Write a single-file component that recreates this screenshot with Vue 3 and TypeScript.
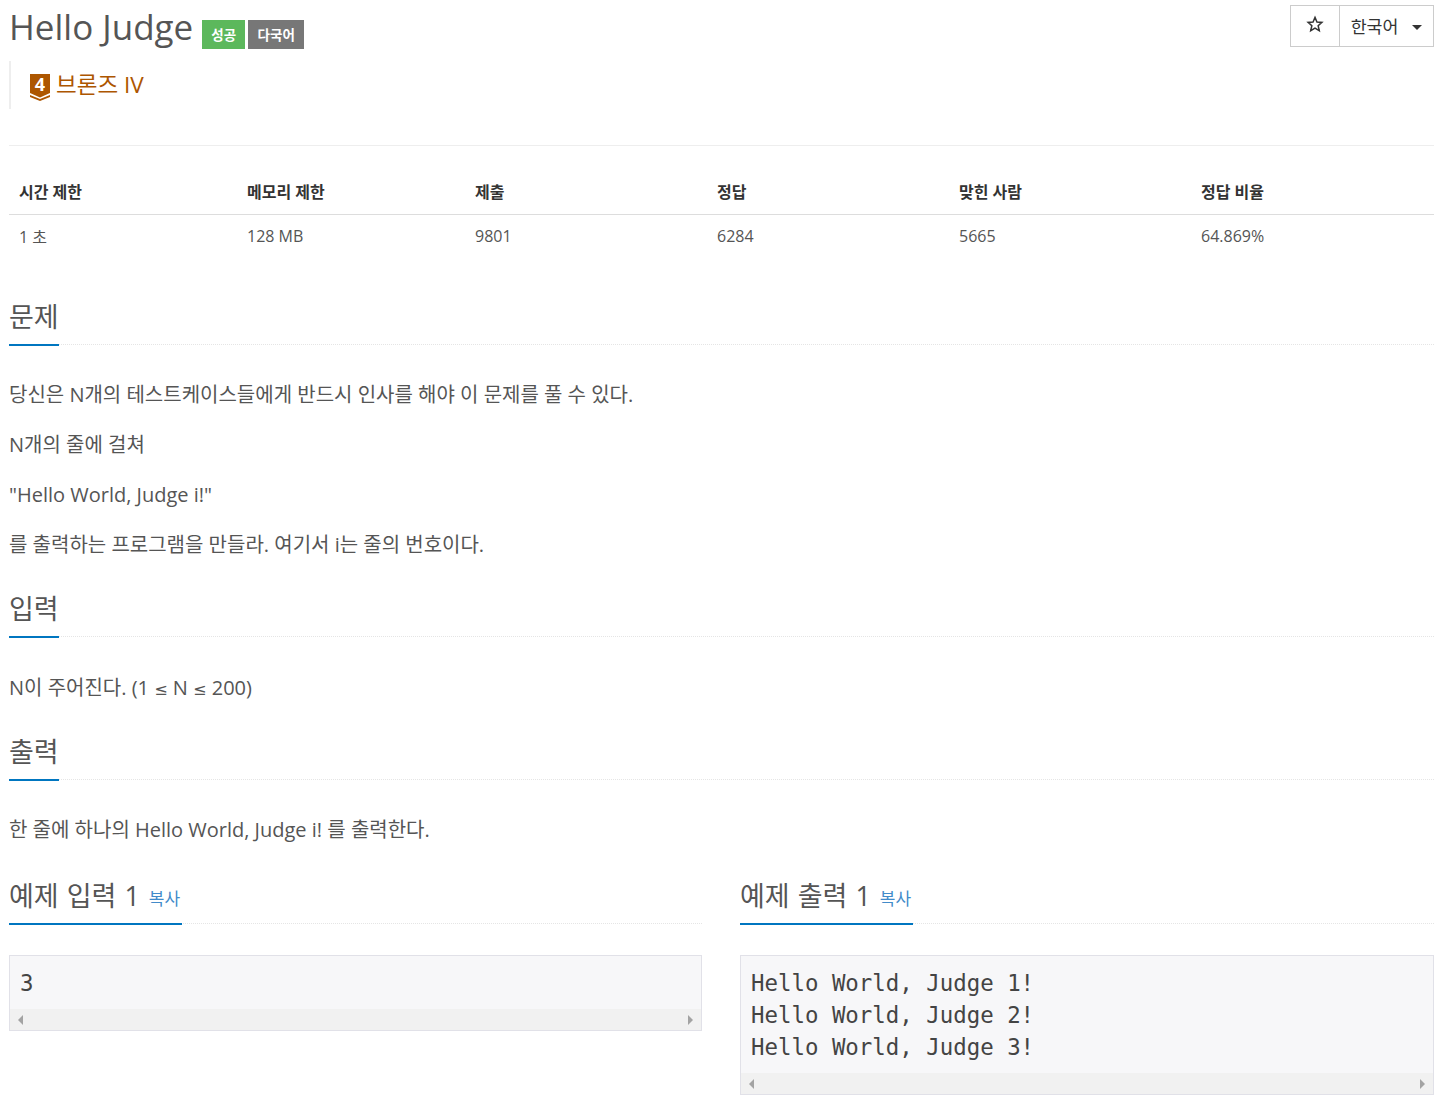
<script setup lang="ts">
const headers: string[] = ['시간 제한', '메모리 제한', '제출', '정답', '맞힌 사람', '정답 비율']
const values: string[] = ['1 초', '128 MB', '9801', '6284', '5665', '64.869%']
const problem: string[] = [
  '당신은 N개의 테스트케이스들에게 반드시 인사를 해야 이 문제를 풀 수 있다.',
  'N개의 줄에 걸쳐',
  '"Hello World, Judge i!"',
  '를 출력하는 프로그램을 만들라. 여기서 i는 줄의 번호이다.'
]
</script>

<template>
  <div class="page">
    <div class="top">
      <div class="title-wrap">
        <span class="title">Hello Judge</span>
        <span class="label green">성공</span>
        <span class="label gray">다국어</span>
      </div>
      <div class="btns">
        <span class="btn star">
          <svg width="18" height="18" viewBox="0 0 24 24" fill="none" stroke="#333" stroke-width="2" stroke-linejoin="miter"><path d="M12 3.2l2.600 6.100 6.600.6-5 4.400 1.500 6.500L12 17.400l-5.700 3.400 1.500-6.500-5-4.400 6.600-.6z"/></svg>
        </span>
        <span class="btn lang">한국어<i class="caret"></i></span>
      </div>
    </div>
    <div class="tier">
      <svg class="tier-icon" width="20" height="27" viewBox="0 0 20 27">
        <path d="M0 0H20V19L10 23.500L0 19Z" fill="#ad5600"/>
        <path d="M0 21L10 25L20 21V23L10 27L0 23Z" fill="#ad5600"/>
        <text x="10" y="17" text-anchor="middle" class="tier-num">4</text>
      </svg>
      <span class="tier-name">브론즈 IV</span>
    </div>
    <hr class="rule" />

    <table class="info">
      <thead>
        <tr><th v-for="h in headers" :key="h">{{ h }}</th></tr>
      </thead>
      <tbody>
        <tr><td v-for="v in values" :key="v">{{ v }}</td></tr>
      </tbody>
    </table>

    <section class="sec first">
      <div class="head"><h2>문제</h2></div>
      <div class="body">
        <p v-for="p in problem" :key="p">{{ p }}</p>
      </div>
    </section>

    <section class="sec">
      <div class="head"><h2>입력</h2></div>
      <div class="body"><p class="input-line">N이 주어진다. (1 <span class="le">≤</span> N <span class="le">≤</span> 200)</p></div>
    </section>

    <section class="sec">
      <div class="head"><h2>출력</h2></div>
      <div class="body"><p>한 줄에 하나의 Hello World, Judge i! 를 출력한다.</p></div>
    </section>

    <div class="samples">
      <section class="sample">
        <div class="head"><h2>예제 입력 1 <a class="copy">복사</a></h2></div>
        <div class="pre">
          <pre>3</pre>
          <div class="scrollbar"><i class="arrow left"></i><i class="arrow right"></i></div>
        </div>
      </section>
      <section class="sample">
        <div class="head"><h2>예제 출력 1 <a class="copy">복사</a></h2></div>
        <div class="pre">
          <pre>Hello World, Judge 1!
Hello World, Judge 2!
Hello World, Judge 3!</pre>
          <div class="scrollbar"><i class="arrow left"></i><i class="arrow right"></i></div>
        </div>
      </section>
    </div>
  </div>
</template>

<style>
html, body { background: #fff; }
</style>

<style scoped>
.page {
  box-sizing: border-box;
  width: 1437px;
  height: 1099px;
  overflow: hidden;
  padding: 0 3px 0 9px;
  font-family: "Open Sans", "Noto Sans CJK KR", sans-serif;
  color: #555;
}
.top { display: flex; justify-content: space-between; align-items: flex-start; height: 61px; }
.title-wrap { display: flex; align-items: flex-start; }
.title { font-size: 35px; line-height: 54px; color: #555; }
.label {
  margin-top: 20px;
  height: 29px;
  line-height: 30px;
  font-size: 13.500px;
  font-weight: 700;
  color: #fff;
  text-align: center;
}
.green { background: #5cb85c; width: 43px; margin-left: 9px; }
.gray { background: #777; width: 56px; margin-left: 3px; }
.btns { display: flex; margin-top: 5px; height: 42px; border: 1px solid #ccc; box-sizing: border-box; }
.btn { display: flex; align-items: center; justify-content: center; color: #333; font-size: 17.300px; }
.star { width: 49px; border-right: 1px solid #ccc; box-sizing: border-box; padding-bottom: 4px; }
.lang { width: 93px; padding-bottom: 2px; box-sizing: border-box; }
.caret {
  margin-left: 14px;
  margin-top: 4px;
  width: 0;
  height: 0;
  border-top: 5px solid #333;
  border-left: 5px solid transparent;
  border-right: 5px solid transparent;
}
.tier {
  height: 48px;
  border-left: 2px solid #eee;
  padding-left: 19px;
  display: flex;
  align-items: flex-start;
  gap: 6px;
}
.tier-icon { margin-top: 13px; overflow: visible; }
.tier-num { font: 700 18px "Open Sans", sans-serif; fill: #fff; }
.tier-name { font-size: 22.500px; line-height: 48px; color: #ad5600; }
.rule { margin: 36px 0 0; border: 0; border-top: 1px solid #eee; }
.info { width: 100%; border-collapse: collapse; table-layout: fixed; margin-top: 24px; font-size: 16px; color: #555; }
.info th, .info td { box-sizing: border-box; padding: 0 10px; text-align: left; }
.info th { height: 44px; font-size: 16px; font-weight: 700; color: #333; border-bottom: 1px solid #ddd; padding-bottom: 2px; }
.info td { height: 43px; padding-top: 0; }
.info th:nth-child(1), .info th:nth-child(2) { width: 228px; }
.info th:nth-child(3), .info th:nth-child(4), .info th:nth-child(5) { width: 242px; }
.sec.first { margin-top: 41px; }
.head { border-bottom: 1px dotted #e5e5e5; height: 46px; }
.head h2 {
  display: inline-block;
  box-sizing: border-box;
  height: 48px;
  margin: 0;
  font-size: 27px;
  word-spacing: 1px;
  line-height: 38px;
  font-weight: 400;
  color: #555;
  border-bottom: 2px solid #0076c0;
}
.body { padding: 35px 0 10px; font-size: 20px; line-height: 30px; }
.body p { margin: 0 0 20px; }
.body p.input-line { padding-top: 1px; }
.le { font-family: "DejaVu Sans", sans-serif; font-size: 16px; line-height: 1; }
.samples { display: grid; grid-template-columns: 693px 694px; gap: 38px; margin-top: 2px; }
.copy { font-size: 17px; word-spacing: 0; color: #428bca; margin-left: 1px; padding-right: 2px; vertical-align: 1px; line-height: 1; }
.pre { margin-top: 31px; border: 1px solid #e1e1e8; background: #f7f7f9; }
pre {
  margin: 0;
  padding: 11px 10px 10px;
  font-family: "DejaVu Sans Mono", monospace;
  font-size: 22.400px;
  line-height: 32px;
  color: #444;
}
.scrollbar { height: 21px; background: #f1f1f1; position: relative; }
.arrow { position: absolute; top: 6px; width: 0; height: 0; border-top: 5px solid transparent; border-bottom: 5px solid transparent; }
.left { left: 8px; border-right: 5px solid #a3a3a3; }
.right { right: 8px; border-left: 5px solid #a3a3a3; }
</style>
